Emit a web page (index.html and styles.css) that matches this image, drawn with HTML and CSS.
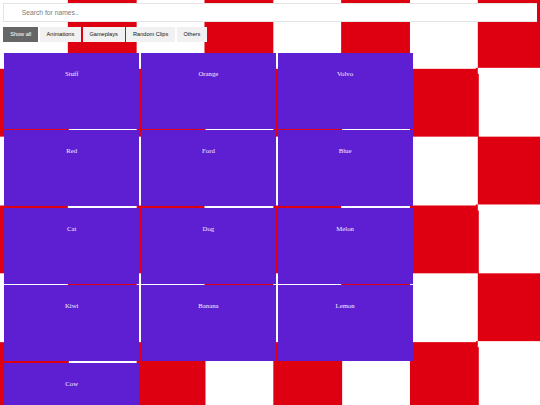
FILE: index.html
```html
<!DOCTYPE html>
<html lang="en">
<head>
<meta charset="utf-8">
<title>Filter</title>
<link rel="stylesheet" href="styles.css">
</head>
<body>
<input class="search" type="text" placeholder="Search for names..">
<div class="filters">
  <button class="btn active">Show all</button>
  <button class="btn">Animations</button>
  <button class="btn">Gameplays</button>
  <button class="btn">Random Clips</button>
  <button class="btn">Others</button>
</div>
<div class="grid">
  <div class="card">Stuff</div>
  <div class="card">Orange</div>
  <div class="card">Volvo</div>
  <div class="card">Red</div>
  <div class="card">Ford</div>
  <div class="card">Blue</div>
  <div class="card">Cat</div>
  <div class="card">Dog</div>
  <div class="card">Melon</div>
  <div class="card">Kiwi</div>
  <div class="card">Banana</div>
  <div class="card">Lemon</div>
  <div class="card">Cow</div>
</div>
</body>
</html>
```
FILE: styles.css
```css
html {
  overflow: hidden;
  background: conic-gradient(#de0010 25%, #ffffff 0 50%, #de0010 0 75%, #ffffff 0) 0 0 / 136.67px 136.67px;
}
body {
  margin: 3.4px;
  font-family: "Liberation Serif", serif;
}
.search {
  display: block;
  box-sizing: border-box;
  width: calc(100% + 3.4px);
  max-width: none;
  height: 18.3px;
  margin: 0 0 5.6px 0;
  padding: 0 8.4px 0 17.3px;
  border: 1px solid #e4e4e4;
  border-right: 0;
  background: #fff;
  font-family: "Liberation Sans", Arial, sans-serif;
  font-size: 6.75px;
  color: #333;
  outline: none;
}
.search::placeholder {
  color: #7a7a7a;
}
.filters {
  display: flex;
  gap: 1.7px;
}
.btn {
  border: none;
  outline: none;
  margin: 0;
  padding: 4.2px 6.75px;
  line-height: 6.6px;
  font-family: "Liberation Sans", Arial, sans-serif;
  font-size: 5.625px;
  background: #f1f1f1;
  color: #111;
}
.btn.active {
  background: #666;
  color: #fff;
}
.grid {
  display: grid;
  grid-template-columns: repeat(3, 135px);
  column-gap: 1.69px;
  row-gap: 1.55px;
  padding: 0.84px;
  margin-top: 9.9px;
}
.card {
  height: 75.9px;
  box-sizing: border-box;
  padding-top: 17px;
  background: #5e1fd2;
  color: #f4eeff;
  text-align: center;
  font-size: 6.75px;
  line-height: 7.8px;
}
```
